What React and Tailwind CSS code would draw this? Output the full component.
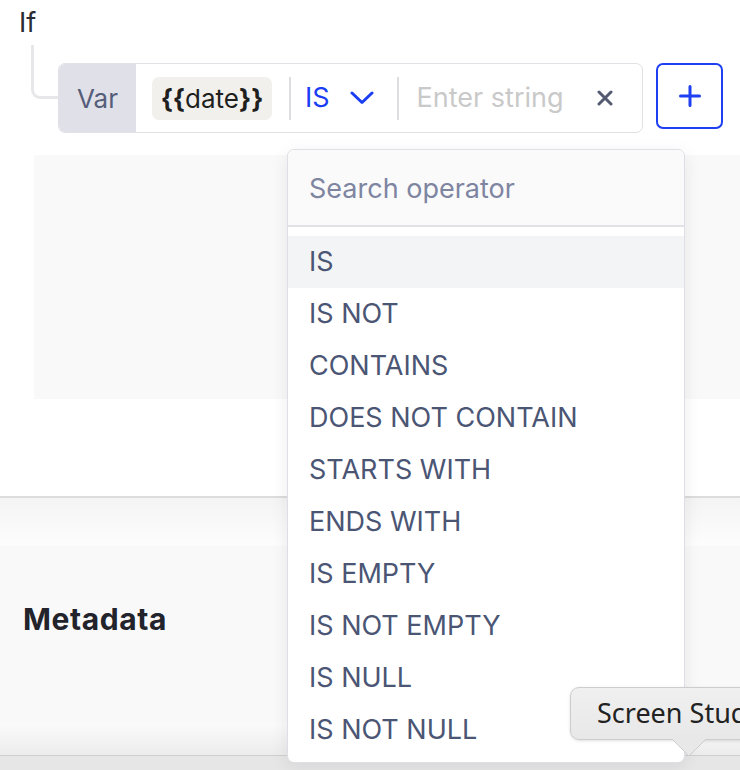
import React from 'react';

const OPERATORS = [
  'IS',
  'IS NOT',
  'CONTAINS',
  'DOES NOT CONTAIN',
  'STARTS WITH',
  'ENDS WITH',
  'IS EMPTY',
  'IS NOT EMPTY',
  'IS NULL',
  'IS NOT NULL',
];

function OperatorMenu() {
  return (
    <div className="absolute left-[287px] top-[149px] w-[398px] h-[614px] rounded-[7px] border border-[#dedee4] bg-white shadow-[0_4px_18px_rgba(0,0,0,0.08)] overflow-hidden z-10">
      <div className="h-[77px] bg-[#fafafb] border-b-2 border-[#e1e1e7] flex items-center px-[21px] pt-[4px]">
        <span className="text-[27px] text-[#7e85a1]">Search operator</span>
      </div>
      <div className="pt-[9px]">
        {OPERATORS.map((op, i) => (
          <div
            key={op}
            className={`h-[52px] flex items-center px-[21px] pt-[1px] text-[27px] text-[#4b5574] ${i === 0 ? 'bg-[#f3f4f6]' : ''}`}
          >
            {op}
          </div>
        ))}
      </div>
    </div>
  );
}

function Tooltip() {
  return (
    <div className="absolute left-[570px] top-[687px] z-20">
      <div className="h-[53px] w-[220px] rounded-[9px] border border-[#cdcdcd] bg-gradient-to-b from-[#f0f0f0] to-[#e8e8e8] flex items-center pl-[26px] shadow-[0_1px_3px_rgba(0,0,0,0.12)]">
        <span className="text-[27px] text-[#222222] whitespace-nowrap" style={{ fontFamily: '"Noto Sans", Inter, sans-serif' }}>Screen Studio</span>
      </div>
      <svg className="absolute left-[102px] top-[51px]" width="34" height="19" viewBox="0 0 34 19">
        <path d="M0 1 L17 18 L34 1" fill="#e8e8e8" stroke="#cdcdcd" strokeWidth="1" />
      </svg>
    </div>
  );
}

export default function App() {
  return (
    <div className="relative w-[740px] h-[770px] overflow-hidden bg-white font-['Inter',sans-serif]">
      {/* condition */}
      <div className="pl-[19px] pt-[5px] h-[45px]">
        <span className="text-[27px] text-[#2a2c33] leading-[36px]">If</span>
      </div>
      <div className="flex items-start">
        <div className="ml-[31px] w-[27px] h-[54px] border-l-[3px] border-b-[3px] border-[#e7e7ea] rounded-bl-[9px]" />
        <div className="mt-[18px] w-[585px] h-[70px] flex items-stretch rounded-[7px] border border-[#e1e1e6] overflow-hidden">
          <div className="w-[77px] bg-[#e0e1e8] flex items-center justify-center text-[26px] text-[#555d7a]">Var</div>
          <div className="flex items-center pl-[16px]">
            <div className="h-[43px] w-[120px] rounded-[7px] bg-[#f1f0ec] flex items-center justify-center text-[26px] text-[#1f1f1f]">
              <span className="font-bold">{'{{'}</span>
              <span>date</span>
              <span className="font-bold">{'}}'}</span>
            </div>
            <div className="ml-[17px] w-[2px] h-[43px] bg-[#dcdce1]" />
            <span className="ml-[14px] text-[27px] text-[#1b3ef4]">IS</span>
            <svg className="ml-[20px]" width="24" height="14" viewBox="0 0 24 14" fill="none">
              <path d="M2 2 L12 11.5 L22 2" stroke="#1b3ef4" strokeWidth="3" strokeLinecap="round" strokeLinejoin="round" />
            </svg>
            <div className="ml-[23px] w-[2px] h-[43px] bg-[#dcdce1]" />
            <span className="ml-[18px] text-[27px] text-[#c9c9c9]">Enter string</span>
            <svg className="ml-[33px]" width="16" height="16" viewBox="0 0 16 16" fill="none">
              <path d="M2 2 L14 14 M14 2 L2 14" stroke="#545a70" strokeWidth="3" strokeLinecap="round" />
            </svg>
          </div>
        </div>
        <button className="mt-[18px] ml-[13px] w-[67px] h-[66px] rounded-[7px] border-2 border-[#1f3ff2] bg-white flex items-center justify-center">
          <svg width="22" height="22" viewBox="0 0 22 22" fill="none">
            <path d="M11 1.5 V20.5 M1.5 11 H20.5" stroke="#1f3ff2" strokeWidth="3" strokeLinecap="round" />
          </svg>
        </button>
      </div>

      {/* panel */}
      <div className="mt-[22px] ml-[34px] h-[244px] bg-[#f9f9f9]" />
      <div className="h-[97px]" />
      <div className="h-[2px] bg-[#dcdcdc]" />
      <div className="h-[48px] bg-gradient-to-b from-[#f4f4f4] to-[#fdfdfd]" />

      {/* metadata */}
      <div className="h-[176px] bg-[#f9f9f9] pl-[23px] pt-[55px]">
        <span className="text-[30px] leading-[36px] font-bold text-[#22232b] tracking-[0.6px]">Metadata</span>
      </div>
      <div className="h-[33px] bg-gradient-to-b from-[#fbfbfb] to-[#ececec]" />
      <div className="h-[1px] bg-[#cfcfcf]" />
      <div className="h-[20px] bg-[#e6e6e6]" />

      <OperatorMenu />
      <Tooltip />
    </div>
  );
}
